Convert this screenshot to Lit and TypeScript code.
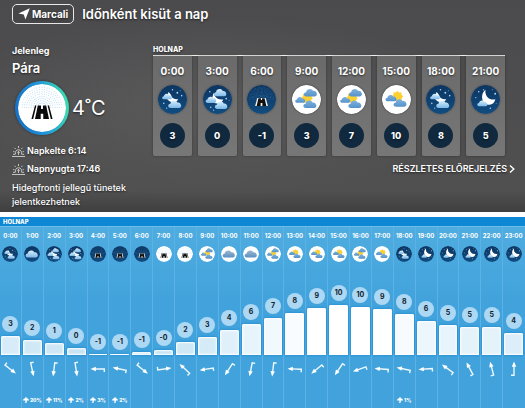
import { LitElement, html, svg, css, nothing } from "lit";
import { customElement, property } from "lit/decorators.js";

type Sky =
  | "night-partly"
  | "night-cloudy"
  | "night-fog"
  | "night-clear"
  | "night-overcast"
  | "day-cloudy"
  | "day-partly"
  | "day-overcast"
  | "day-fog";

const cloud = (x: number, y: number, w: number, fill: string) => svg`
  <path transform="translate(${x} ${y}) scale(${w / 14})" fill=${fill}
    d="M-4.5 4 C-8 4 -8.2 -0.4 -4.9 -0.6 C-4.6 -4.6 1.2 -5.4 2.6 -1.9 C6.2 -3 8.6 3.6 4.4 4 Z" />`;

const stars = (points: number[][]) =>
  points.map(([x, y, r]) => svg`<circle cx=${x} cy=${y} r=${r} fill="#a9d3ee" />`);

const fogDots = (fill: string) => {
  const dots = [];
  for (let ring = 0; ring < 8; ring++) {
    const radius = 2.6 + ring * 1.4;
    const count = 10 + ring * 2;
    for (let step = 0; step <= count; step++) {
      const angle = Math.PI + (step * Math.PI) / count;
      const x = 15 + Math.cos(angle) * radius;
      const y = 14.5 + Math.sin(angle) * radius;
      dots.push(svg`<circle cx=${x} cy=${y} r="0.3" fill=${fill} />`);
    }
  }
  return dots;
};

const road = (fill: string) => svg`
  <path fill=${fill} d="M10.6 13.4 H11.5 L9.5 21.8 H8.4 Z M18.5 13.4 H19.4 L21.6 21.8 H20.5 Z
    M12.4 13.4 H14.4 V15.6 H15.6 V13.4 H17.6 L19.4 21.8 H15.8 V18.6 H14.2 V21.8 H10.6 Z" />`;

const sun = (x: number, y: number) => svg`
  <path fill="#fbd02f" transform="translate(${x} ${y})"
    d="M0 -6 L1.6 -4.2 L4 -4.6 L4.2 -2 L6 0 L4.3 1.8 L4.2 4.2 L1.8 4.2 L0 6 L-1.8 4.2 L-4.2 4.2 L-4.3 1.8 L-6 0 L-4.2 -2 L-4 -4.6 L-1.6 -4.2 Z" />`;

const drawings: Record<Sky, () => unknown> = {
  "night-partly": () => svg`
    ${stars([[15, 5, 0.8], [20, 8, 1], [24.5, 11, 0.8], [6, 19, 0.8], [9, 24, 0.6], [23, 6, 0.5]])}
    <path fill="#fff" d="M11 7 C12 9 14 10 14 12 C15.5 14.5 18 15 21 14.5 C19 19 12 19 9 14 Z" />
    ${cloud(9.6, 12, 10, "url(#mist)")}${cloud(17.6, 20, 13.5, "url(#mist)")}`,
  "night-cloudy": () => svg`
    ${stars([[7, 7, 0.8], [24, 14, 0.9], [27, 16, 0.5], [8, 23, 0.8], [11, 26, 0.6]])}
    <path fill="#fff" d="M11 8 C12 13 15 15 21 15 C19 20 11 21 9 15 Z" />
    ${cloud(18, 8, 13, "url(#mist)")}${cloud(8.5, 15.4, 11, "url(#mist)")}${cloud(19, 21, 13, "url(#mist)")}`,
  "night-clear": () => svg`
    ${stars([[8, 7, 0.8], [13, 5, 0.7], [5, 13, 0.7], [25, 9, 1], [20, 24, 0.8], [22, 5, 0.5], [26, 19, 0.5]])}
    <path fill="#fff" d="M15 4.8 C9 9.5 11 20.4 19 20.4 C22.3 20.4 24.4 18.4 25.2 14.8 C20 16.4 13.8 12 15 4.8 Z" />
    ${cloud(12, 19, 10.5, "url(#mist)")}`,
  "night-overcast": () => cloud(15, 15, 23, "url(#mist)"),
  "night-fog": () => svg`${fogDots("#4f8fbd")}<path fill="#f1f4f5" d="M10.6 13.4 H19.4 L21.6 21.8 H8.4 Z" />
    <path fill="#111" d="M11.8 13.8 H14.4 V15.6 H15.6 V13.8 H18.2 L20 21.8 H15.9 V18.6 H14.1 V21.8 H10 Z" />`,
  "day-cloudy": () => svg`
    ${sun(15.5, 13.6)}
    ${cloud(19.4, 8, 13.5, "url(#sky)")}${cloud(8.8, 15.4, 10.5, "url(#sky)")}${cloud(18.8, 20, 13.5, "url(#sky)")}`,
  "day-partly": () => svg`
    ${sun(16, 12)}${cloud(9.6, 13.6, 11.5, "url(#sky)")}${cloud(19, 18.6, 13.5, "url(#sky)")}`,
  "day-overcast": () => cloud(15, 15, 23, "url(#dusk)"),
  "day-fog": () => svg`${fogDots("#8fc6ee")}${road("#0a0a0a")}`,
};

@customElement("sky-icon")
class SkyIcon extends LitElement {
  @property() sky: Sky = "day-cloudy";

  static styles = css`
    :host { display: block; border-radius: 50%; aspect-ratio: 1; overflow: hidden; }
    .icon { display: block; width: 100%; height: 100%; }
  `;

  render() {
    const night = this.sky.startsWith("night");
    return html`<svg class="icon" viewBox="0 0 30 30" aria-hidden="true">
      <defs>
        <linearGradient id="dark" x2="0" y2="1"><stop stop-color="#0c3561" /><stop offset="1" stop-color="#114c80" /></linearGradient>
        <linearGradient id="mist" x2="0" y2="1"><stop stop-color="#d8effc" /><stop offset="1" stop-color="#7db8e8" /></linearGradient>
        <linearGradient id="sky" x2="0" y2="1"><stop stop-color="#7fb2dc" /><stop offset="1" stop-color="#5592cb" /></linearGradient>
        <linearGradient id="dusk" x2="0" y2="1"><stop stop-color="#9fb6cc" /><stop offset="1" stop-color="#5b91c4" /></linearGradient>
      </defs>
      <circle cx="15" cy="15" r="15" fill=${night ? "url(#dark)" : "#fff"} />
      ${drawings[this.sky]()}
    </svg>`;
  }
}

interface Hour {
  sky: Sky;
  temp: string;
  bar: number;
  wind: number;
  rain?: string;
}

const hours: Hour[] = [
  { sky: "night-partly", temp: "3", bar: 19, wind: 128 },
  { sky: "night-overcast", temp: "2", bar: 15, wind: 168, rain: "20%" },
  { sky: "night-cloudy", temp: "1", bar: 12, wind: 187, rain: "11%" },
  { sky: "night-cloudy", temp: "0", bar: 7, wind: 171, rain: "2%" },
  { sky: "night-fog", temp: "-1", bar: 1, wind: 270, rain: "3%" },
  { sky: "night-fog", temp: "-1", bar: 1, wind: 281, rain: "2%" },
  { sky: "night-fog", temp: "-1", bar: 3, wind: 129 },
  { sky: "day-fog", temp: "-0", bar: 5, wind: 82 },
  { sky: "day-fog", temp: "2", bar: 13, wind: 313 },
  { sky: "day-cloudy", temp: "3", bar: 18, wind: 261 },
  { sky: "day-overcast", temp: "4", bar: 25, wind: 213 },
  { sky: "day-overcast", temp: "6", bar: 31, wind: 191 },
  { sky: "day-cloudy", temp: "7", bar: 37, wind: 187 },
  { sky: "day-partly", temp: "8", bar: 42, wind: 272 },
  { sky: "day-partly", temp: "9", bar: 47, wind: 230 },
  { sky: "day-partly", temp: "10", bar: 50, wind: 214 },
  { sky: "day-cloudy", temp: "10", bar: 48, wind: 250 },
  { sky: "day-partly", temp: "9", bar: 46, wind: 274 },
  { sky: "night-partly", temp: "8", bar: 41, wind: 281, rain: "1%" },
  { sky: "night-clear", temp: "6", bar: 34, wind: 266 },
  { sky: "night-clear", temp: "5", bar: 30, wind: 306 },
  { sky: "night-clear", temp: "5", bar: 28, wind: 332 },
  { sky: "night-clear", temp: "5", bar: 28, wind: 345 },
  { sky: "night-clear", temp: "4", bar: 22, wind: 0 },
];

const summary: { time: string; sky: Sky; temp: string }[] = [
  { time: "0:00", sky: "night-partly", temp: "3" },
  { time: "3:00", sky: "night-cloudy", temp: "0" },
  { time: "6:00", sky: "night-fog", temp: "-1" },
  { time: "9:00", sky: "day-cloudy", temp: "3" },
  { time: "12:00", sky: "day-cloudy", temp: "7" },
  { time: "15:00", sky: "day-partly", temp: "10" },
  { time: "18:00", sky: "night-partly", temp: "8" },
  { time: "21:00", sky: "night-clear", temp: "5" },
];

@customElement("app-root")
class AppRoot extends LitElement {
  static styles = css`
    :host {
      display: block;
      min-height: 100vh;
      background: #fff;
      color: #fff;
      font-family: Inter, "Liberation Sans", sans-serif;
      font-size: 9px;
      line-height: 14px;
    }
    * { box-sizing: border-box; }
    h1, h2, p { margin: 0; font-size: inherit; font-weight: inherit; }

    .now {
      background: radial-gradient(ellipse at 40% 50%, #5a5a5b, transparent 60%),
        linear-gradient(#4b4b4d, #505051 90%, #3f3f40);
      padding: 4px 10px 3px 12px;
      text-shadow: 0 1px 2px #0009;
    }
    .top { display: flex; align-items: center; gap: 8px; height: 20px; }
    .place {
      display: flex; align-items: center; gap: 2px;
      height: 20px; padding: 0 5px;
      border: 1px solid #e8e8e8; border-radius: 5px;
      background: #464648; color: inherit;
      font: 700 10px/14px Inter, sans-serif;
      text-shadow: inherit;
    }
    .pin { width: 12px; height: 12px; }
    .title { font-size: 13px; font-weight: 600; line-height: 18px; }
    .body { display: grid; grid-template-columns: 141px 1fr; margin-top: 20px; }
    .label { font-weight: 700; }
    .state { font-size: 13px; line-height: 20px; font-weight: 600; }
    .reading { display: flex; align-items: center; gap: 3px; margin: 3px 0 0 3px; font-size: 20px; line-height: 24px; }
    .ring {
      width: 54px; height: 54px; padding: 3px; border-radius: 50%;
      background: linear-gradient(80deg, #1573c9 10%, #2196dc 50%, #3bd9b0 90%);
      box-shadow: 0 0 3px #0006;
    }
    .sun-row { display: flex; align-items: center; gap: 2px; height: 18px; font-weight: 600; }
    .sun-icon { width: 13px; height: 13px; }
    .facts { margin-top: 7px; }
    .front { margin-top: 3px; max-width: 130px; font-weight: 500; }

    .tomorrow { padding-right: 10px; }
    .day { font-size: 7px; line-height: 11px; font-weight: 800; }
    .cards { display: grid; grid-template-columns: repeat(8, 1fr); gap: 6px; border-top: 1px solid #f3f0f0; }
    .card {
      display: flex; flex-direction: column; align-items: center;
      height: 100px; padding-top: 8px;
      border-radius: 0 0 2px 2px;
      background: linear-gradient(#6a6a6b, #777778);
      font-size: 10px; font-weight: 700;
      box-shadow: 0 0 3px #0005;
    }
    .card sky-icon { width: 29px; margin-top: 7px; box-shadow: 0 0 2px #0006; }
    .chip {
      display: grid; place-items: center;
      width: 25px; height: 25px; margin-top: 9px; border-radius: 50%;
      background: #10293f; font-size: 9px; font-weight: 800;
    }
    .more-row { display: flex; justify-content: flex-end; margin-top: 6px; margin-right: -10px; }
    .more { display: flex; align-items: center; gap: 2px; color: inherit; text-decoration: none; font-weight: 600; }
    .chevron { width: 6px; height: 10px; }

    .detail { margin-top: 5px; background: #42a3dc; }
    .band { height: 9px; padding-left: 3px; background: #0e88d4; font-size: 6px; line-height: 9px; font-weight: 800; }
    .hours { display: grid; grid-template-columns: repeat(24, 1fr); border-top: 1px solid #6cbcec; }
    .hour {
      display: flex; flex-direction: column; align-items: center;
      min-width: 0; min-height: 181px;
      border-right: 1px solid #5bb2e6;
      background: linear-gradient(#4facdf, #42a3dc 40%);
    }
    .hour:last-child { border-right-color: transparent; }
    .clock { margin-top: 4px; font-size: 6px; line-height: 10px; font-weight: 700; }
    .hour sky-icon { width: 16px; margin-top: 5px; }
    .plot { display: flex; flex-direction: column; align-items: center; justify-content: flex-end; gap: 4px; width: 100%; height: 93px; padding: 0 1px; }
    .bubble {
      display: grid; place-items: center; width: 16px; height: 16px;
      border-radius: 50%; background: #acd8f3; color: #10222f;
      font-size: 7px; line-height: 8px; font-weight: 700;
    }
    .bar {
      width: 100%; border-radius: 2px 2px 0 0;
      box-shadow: inset 0 0 2px 1px #fff, 0 0 3px #1583cc;
    }
    .wind { width: 16px; height: 16px; margin-top: 6px; }
    .rain { display: flex; align-items: center; gap: 1px; margin-top: 18px; font-size: 5px; line-height: 10px; font-weight: 800; }
    .drop { width: 6px; height: 6px; }
  `;

  private sunIcon() {
    return html`<svg class="sun-icon" viewBox="0 0 13 13" fill="none" stroke="#e0e0e0" stroke-width=".8" aria-hidden="true">
      <path d="M0 11.5 H13 M1 9.3 H3.2 M9.8 9.3 H12 M3.6 9.3 A3.2 3.2 0 1 1 9.4 9.3 M6.5 1 V3 M1.2 6.6 H2.4 M10.6 6.6 H11.8 M2.5 2.8 L3.7 4 M10.5 2.8 L9.3 4 M6.5 10 V6.5 M5.3 7.7 L6.5 6.4 L7.7 7.7" />
    </svg>`;
  }

  private renderHour(hour: Hour, index: number) {
    const strength = Math.min(100, 65 + hour.bar * 0.75);
    return html`<div class="hour">
      <span class="clock">${index}:00</span>
      <sky-icon .sky=${hour.sky}></sky-icon>
      <div class="plot">
        <span class="bubble">${hour.temp}</span>
        <div class="bar" style="height:${hour.bar}px;background:rgb(255 255 255 / ${strength}%)"></div>
      </div>
      <svg class="wind" viewBox="0 0 16 16" aria-hidden="true">
        <g transform="rotate(${hour.wind} 8 8)">
          <path d="M8 4 V14.3 H5" fill="none" stroke="#eef8ff" stroke-width="1.4" />
          <path d="M8 .5 L10.2 5.8 H5.8 Z" fill="#fff" />
        </g>
      </svg>
      ${hour.rain
        ? html`<span class="rain"><svg class="drop" viewBox="0 0 6 6" aria-hidden="true">
            <path fill="#fff" d="M0 3.6 C0 0 6 0 6 3.6 H3.8 V5 C3.8 6.2 1.8 6.2 1.8 5 H2.4 V3.6 Z M2.5 0 H3.5 V1.5 H2.5 Z" />
          </svg>${hour.rain}</span>`
        : nothing}
    </div>`;
  }

  render() {
    return html`
      <section class="now">
        <div class="top">
          <button class="place" type="button">
            <svg class="pin" viewBox="0 0 12 12" aria-hidden="true"><path fill="#fff" d="M11.8 .2 L7.4 11.6 L5.8 6.6 L.4 5.4 Z" /></svg>Marcali
          </button>
          <h1 class="title">Időnként kisüt a nap</h1>
        </div>
        <div class="body">
          <div class="current">
            <h2 class="label">Jelenleg</h2>
            <p class="state">Pára</p>
            <div class="reading">
              <div class="ring"><sky-icon .sky=${"day-fog"}></sky-icon></div>
              <span>4˚C</span>
            </div>
            <div class="facts">
              <div class="sun-row">${this.sunIcon()}Napkelte 6:14</div>
              <div class="sun-row">${this.sunIcon()}Napnyugta 17:46</div>
            </div>
            <p class="front">Hidegfronti jellegű tünetek jelentkezhetnek</p>
          </div>
          <div class="tomorrow">
            <h2 class="day">HOLNAP</h2>
            <div class="cards">
              ${summary.map(
                (card) => html`<div class="card">
                  <span>${card.time}</span>
                  <sky-icon .sky=${card.sky}></sky-icon>
                  <span class="chip">${card.temp}</span>
                </div>`
              )}
            </div>
            <div class="more-row">
              <a class="more" href="#reszletes">RÉSZLETES ELŐREJELZÉS
                <svg class="chevron" viewBox="0 0 6 10" aria-hidden="true"><path d="M1 1.5 L4.8 5 L1 8.5" fill="none" stroke="#fff" stroke-width="1.4" /></svg>
              </a>
            </div>
          </div>
        </div>
      </section>
      <section class="detail" id="reszletes">
        <h2 class="band">HOLNAP</h2>
        <div class="hours">${hours.map((hour, index) => this.renderHour(hour, index))}</div>
      </section>
    `;
  }
}
